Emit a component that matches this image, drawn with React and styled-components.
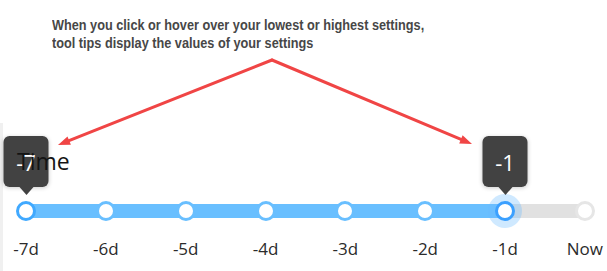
import React from "react";
import styled, { createGlobalStyle } from "styled-components";

const GlobalStyle = createGlobalStyle`
  html, body {
    margin: 0;
    padding: 0;
    background: #ffffff;
  }
  body {
    font-family: "Open Sans", "Noto Sans", sans-serif;
  }
`;

const marks = ["-7d", "-6d", "-5d", "-4d", "-3d", "-2d", "-1d", "Now"];
const lowIndex = 0;
const highIndex = 6;

const Page = styled.div`
  position: relative;
  width: 607px;
  height: 271px;
  overflow: hidden;
  display: flex;
  flex-direction: column;
`;

const Note = styled.div`
  padding: 16px 0 0 52px;
  height: 123px;
  box-sizing: border-box;
  flex-shrink: 0;
`;

// the caption is a narrow grotesque: squeeze Liberation Sans to match
const NoteText = styled.div`
  width: 560px;
  transform: scaleX(0.82);
  transform-origin: left top;
  font-family: "Liberation Sans", Arial, sans-serif;
  font-weight: bold;
  font-size: 15.5px;
  line-height: 18px;
  color: #474747;
`;

const Arrows = styled.svg`
  position: absolute;
  left: 0;
  top: 0;
  pointer-events: none;
  z-index: 5;
`;

const Panel = styled.div`
  flex: 1;
  border-left: 3px solid #f0f0f0;
  padding-top: 23px;
`;

const Title = styled.div`
  position: relative;
  z-index: 3;
  padding-left: 14px;
  font-size: 23px;
  line-height: 30px;
  color: #141414;
`;

const Marks = styled.div`
  position: relative;
  margin: 25px 0 0 13px;
  width: 579px;
  height: 20px;
  display: flex;
  justify-content: space-between;
  align-items: center;

  &::before {
    content: "";
    position: absolute;
    left: 10px;
    right: 10px;
    top: 3px;
    height: 14px;
    background: linear-gradient(
      to right,
      #69bfff 0%,
      #69bfff ${(p) => p.$fill}%,
      #e1e1e1 ${(p) => p.$fill}%,
      #e1e1e1 100%
    );
  }
`;

const Dot = styled.div`
  position: relative;
  z-index: 1;
  width: 20px;
  height: 20px;
  box-sizing: border-box;
  border-radius: 50%;
  background: #ffffff;
  border: 3px solid
    ${(p) => (p.$active ? "#3ba0ff" : p.$edge ? "#40a9ff" : p.$off ? "#e6e6e6" : "#69bfff")};
  box-shadow: ${(p) => (p.$active ? "0 0 0 7px rgba(105, 186, 255, 0.32)" : "none")};
`;

const Tip = styled.div`
  position: absolute;
  left: 50%;
  bottom: calc(100% + 17px);
  transform: translateX(-50%);
  width: 45px;
  height: 51px;
  border-radius: 6px;
  background: #424242;
  box-shadow: 0 1px 4px rgba(0, 0, 0, 0.2);
  color: #ffffff;
  font-size: 22px;
  font-weight: 400;
  display: flex;
  align-items: center;
  justify-content: center;

  &::after {
    content: "";
    position: absolute;
    top: 100%;
    left: 50%;
    transform: translateX(-50%);
    border-left: 7px solid transparent;
    border-right: 7px solid transparent;
    border-top: 8px solid #424242;
  }
`;

const Labels = styled.div`
  margin: 16px 0 0 13px;
  width: 579px;
  display: flex;
  justify-content: space-between;
`;

const Label = styled.div`
  width: 20px;
  display: flex;
  justify-content: center;
  white-space: nowrap;
  font-size: 17px;
  line-height: 24px;
  color: #2b2b2b;
`;

function Arrow({ d, head }) {
  return (
    <g>
      <path d={d} fill="none" stroke="#f04545" strokeWidth="3" strokeLinecap="round" strokeLinejoin="round" />
      <polygon points={head} fill="#f04545" />
    </g>
  );
}

export default function App() {
  const fill = (highIndex / (marks.length - 1)) * 100;
  return (
    <>
      <GlobalStyle />
      <Page>
        <Note>
          <NoteText>
            When you click or hover over your lowest or highest settings,
            <br />
            tool tips display the values of your settings
          </NoteText>
        </Note>
        <Arrows width="607" height="271" viewBox="0 0 607 271">
          <Arrow d="M272 60 L69 140.6" head="58,145 70.9,144.8 67.5,136.4" />
          <Arrow d="M272 60 L461 139.4" head="472,144 459.2,143.6 462.6,135.3" />
        </Arrows>
        <Panel>
          <Title>Time</Title>
          <Marks $fill={fill}>
            {marks.map((m, i) => (
              <Dot
                key={m}
                $edge={i === lowIndex}
                $active={i === highIndex}
                $off={i > highIndex}
              >
                {i === lowIndex && <Tip>-7</Tip>}
                {i === highIndex && <Tip>-1</Tip>}
              </Dot>
            ))}
          </Marks>
          <Labels>
            {marks.map((m) => (
              <Label key={m}>{m}</Label>
            ))}
          </Labels>
        </Panel>
      </Page>
    </>
  );
}
